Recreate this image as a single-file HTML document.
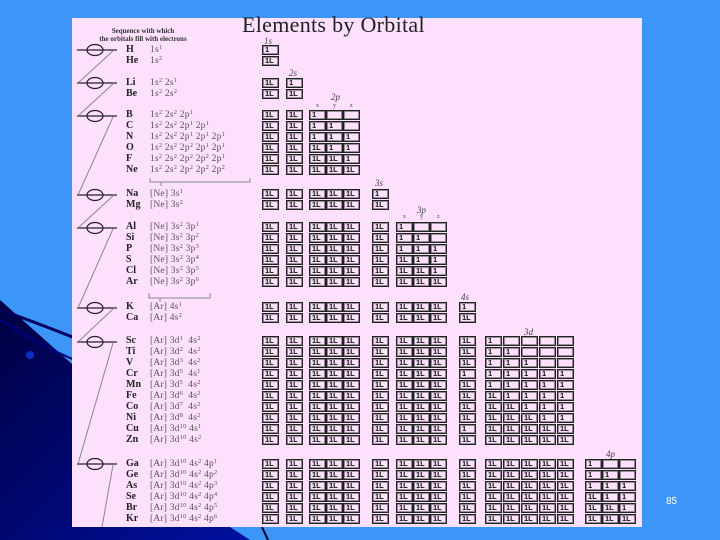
<!DOCTYPE html>
<html><head><meta charset="utf-8"><style>
*{margin:0;padding:0}
body{width:720px;height:540px;overflow:hidden;background:#3c96f8;position:relative;font-family:"Liberation Serif",serif}
#bg{position:absolute;left:0;top:0}
#pk{position:absolute;left:72px;top:18px;width:570px;height:509px;background:#fce0fc}
#title{position:absolute;left:242px;top:12px;font-size:22px;color:#222;letter-spacing:0.3px}
#seq{position:absolute;left:78px;top:27px;width:130px;text-align:center;font-size:7px;font-weight:bold;line-height:8px;color:#333}
.r{position:absolute;left:0;height:10px;width:720px}
.r b{position:absolute;left:126px;top:0;font-size:10px;line-height:10px;color:#222}
.r i{position:absolute;left:150px;top:0;font-size:9.5px;line-height:10px;height:10px;font-style:normal;color:#555;white-space:nowrap;letter-spacing:0.2px}
.r i sup{font-size:6.5px;vertical-align:3px;line-height:0}
u{position:absolute;top:0;width:13px;height:7px;border:1.3px solid #222;box-shadow:inset 0 0 0 0.8px #777;text-decoration:none;font-size:7.5px;line-height:7px;font-weight:bold;color:#111;text-align:left;padding:0 0 1px 2px;box-sizing:content-box;font-family:"Liberation Sans",sans-serif;letter-spacing:0}
.a{left:262px}.b{left:286px}
.c{left:309px}.d{left:326px}.e{left:343px}
.f{left:372px}
.g{left:396px}.h{left:413px}.i{left:430px}
.j{left:459px}
.k{left:485px}.l{left:503px}.m{left:521px}.n{left:539px}.o{left:557px}
.p{left:585px}.q{left:602px}.s{left:619px}
.lb{position:absolute;font-size:9px;font-style:italic;color:#444}
.xy{position:absolute;font-size:6px;color:#444}
#pn{position:absolute;left:666px;top:496px;font-family:"Liberation Sans",sans-serif;font-size:10px;color:#fff}
</style></head><body>
<svg id="bg" width="720" height="540">
<defs><linearGradient id="g" x1="0" y1="0" x2="1" y2="1"><stop offset="0" stop-color="#000040"/><stop offset="1" stop-color="#0010a0"/></linearGradient></defs>
<polygon points="0,300 90,380 230,527 250,540 0,540" fill="url(#g)"/>
<path d="M0,310 C30,320 55,330 80,340" stroke="#000060" stroke-width="3" fill="none"/>
<path d="M0,320 C25,335 50,350 75,360" stroke="#000080" stroke-width="2" fill="none"/>
<circle cx="30" cy="355" r="4" fill="#1030c0"/>
<path d="M262,527 L268,540" stroke="#000020" stroke-width="2"/>
</svg>
<div id="pk"></div>
<svg style="position:absolute;left:0;top:0" width="720" height="540">
<g stroke="#222" stroke-width="1.2" fill="none">
<line x1="77" y1="50" x2="117" y2="50"/><ellipse cx="95" cy="50" rx="8" ry="5.5"/>
<line x1="77" y1="83" x2="117" y2="83"/><ellipse cx="95" cy="83" rx="8" ry="5.5"/>
<line x1="77" y1="116" x2="117" y2="116"/><ellipse cx="95" cy="116" rx="8" ry="5.5"/>
<line x1="77" y1="195" x2="117" y2="195"/><ellipse cx="95" cy="195" rx="8" ry="5.5"/>
<line x1="77" y1="228" x2="117" y2="228"/><ellipse cx="95" cy="228" rx="8" ry="5.5"/>
<line x1="77" y1="308" x2="117" y2="308"/><ellipse cx="95" cy="308" rx="8" ry="5.5"/>
<line x1="77" y1="342" x2="117" y2="342"/><ellipse cx="95" cy="342" rx="8" ry="5.5"/>
<line x1="77" y1="464" x2="117" y2="464"/><ellipse cx="95" cy="464" rx="8" ry="5.5"/>
</g>
<g stroke="#888" stroke-width="1" fill="none">
<line x1="114" y1="50" x2="78" y2="83"/><line x1="114" y1="83" x2="78" y2="116"/>
<line x1="113" y1="117" x2="78" y2="195"/><line x1="114" y1="195" x2="78" y2="228"/>
<line x1="113" y1="229" x2="78" y2="308"/><line x1="114" y1="308" x2="78" y2="342"/>
<line x1="113" y1="343" x2="78" y2="464"/><line x1="113" y1="465" x2="102" y2="527"/>
<path d="M150,178 v4 h100 v-4 M161,182 v4"/>
<path d="M149,293 v5 h61 v-5 M160,298 v4"/>
</g>
</svg>
<div id="title">Elements by Orbital</div>
<div id="seq">Sequence with which<br>the orbitals fill with electrons</div>
<div class="lb" style="left:264px;top:36px">1s</div>
<div class="lb" style="left:289px;top:68px">2s</div>
<div class="lb" style="left:331px;top:92px">2p</div>
<div class="xy" style="left:316px;top:103px">x</div><div class="xy" style="left:333px;top:103px">y</div><div class="xy" style="left:350px;top:103px">z</div>
<div class="lb" style="left:375px;top:178px">3s</div>
<div class="lb" style="left:417px;top:205px">3p</div>
<div class="xy" style="left:403px;top:214px">x</div><div class="xy" style="left:420px;top:214px">y</div><div class="xy" style="left:437px;top:214px">z</div>
<div class="lb" style="left:461px;top:292px">4s</div>
<div class="lb" style="left:524px;top:327px">3d</div>
<div class="lb" style="left:606px;top:449px">4p</div>

<div class="r" style="top:45px"><b>H</b><i>1s<sup>1</sup></i><u class="a">1</u></div>
<div class="r" style="top:56px"><b>He</b><i>1s<sup>2</sup></i><u class="a">1L</u></div>
<div class="r" style="top:78px"><b>Li</b><i>1s<sup>2</sup> 2s<sup>1</sup></i><u class="a">1L</u><u class="b">1</u></div>
<div class="r" style="top:89px"><b>Be</b><i>1s<sup>2</sup> 2s<sup>2</sup></i><u class="a">1L</u><u class="b">1L</u></div>
<div class="r" style="top:110px"><b>B</b><i>1s<sup>2</sup> 2s<sup>2</sup> 2p<sup>1</sup></i><u class="a">1L</u><u class="b">1L</u><u class="c">1</u><u class="d"></u><u class="e"></u></div>
<div class="r" style="top:121px"><b>C</b><i>1s<sup>2</sup> 2s<sup>2</sup> 2p<sup>1</sup> 2p<sup>1</sup></i><u class="a">1L</u><u class="b">1L</u><u class="c">1</u><u class="d">1</u><u class="e"></u></div>
<div class="r" style="top:132px"><b>N</b><i>1s<sup>2</sup> 2s<sup>2</sup> 2p<sup>1</sup> 2p<sup>1</sup> 2p<sup>1</sup></i><u class="a">1L</u><u class="b">1L</u><u class="c">1</u><u class="d">1</u><u class="e">1</u></div>
<div class="r" style="top:143px"><b>O</b><i>1s<sup>2</sup> 2s<sup>2</sup> 2p<sup>2</sup> 2p<sup>1</sup> 2p<sup>1</sup></i><u class="a">1L</u><u class="b">1L</u><u class="c">1L</u><u class="d">1</u><u class="e">1</u></div>
<div class="r" style="top:154px"><b>F</b><i>1s<sup>2</sup> 2s<sup>2</sup> 2p<sup>2</sup> 2p<sup>2</sup> 2p<sup>1</sup></i><u class="a">1L</u><u class="b">1L</u><u class="c">1L</u><u class="d">1L</u><u class="e">1</u></div>
<div class="r" style="top:165px"><b>Ne</b><i>1s<sup>2</sup> 2s<sup>2</sup> 2p<sup>2</sup> 2p<sup>2</sup> 2p<sup>2</sup></i><u class="a">1L</u><u class="b">1L</u><u class="c">1L</u><u class="d">1L</u><u class="e">1L</u></div>

<div class="r" style="top:189px"><b>Na</b><i>[Ne] 3s<sup>1</sup></i><u class="a">1L</u><u class="b">1L</u><u class="c">1L</u><u class="d">1L</u><u class="e">1L</u><u class="f">1</u></div>
<div class="r" style="top:200px"><b>Mg</b><i>[Ne] 3s<sup>2</sup></i><u class="a">1L</u><u class="b">1L</u><u class="c">1L</u><u class="d">1L</u><u class="e">1L</u><u class="f">1L</u></div>

<div class="r" style="top:222px"><b>Al</b><i>[Ne] 3s<sup>2</sup> 3p<sup>1</sup></i><u class="a">1L</u><u class="b">1L</u><u class="c">1L</u><u class="d">1L</u><u class="e">1L</u><u class="f">1L</u><u class="g">1</u><u class="h"></u><u class="i"></u></div>
<div class="r" style="top:233px"><b>Si</b><i>[Ne] 3s<sup>2</sup> 3p<sup>2</sup></i><u class="a">1L</u><u class="b">1L</u><u class="c">1L</u><u class="d">1L</u><u class="e">1L</u><u class="f">1L</u><u class="g">1</u><u class="h">1</u><u class="i"></u></div>
<div class="r" style="top:244px"><b>P</b><i>[Ne] 3s<sup>2</sup> 3p<sup>3</sup></i><u class="a">1L</u><u class="b">1L</u><u class="c">1L</u><u class="d">1L</u><u class="e">1L</u><u class="f">1L</u><u class="g">1</u><u class="h">1</u><u class="i">1</u></div>
<div class="r" style="top:255px"><b>S</b><i>[Ne] 3s<sup>2</sup> 3p<sup>4</sup></i><u class="a">1L</u><u class="b">1L</u><u class="c">1L</u><u class="d">1L</u><u class="e">1L</u><u class="f">1L</u><u class="g">1L</u><u class="h">1</u><u class="i">1</u></div>
<div class="r" style="top:266px"><b>Cl</b><i>[Ne] 3s<sup>2</sup> 3p<sup>5</sup></i><u class="a">1L</u><u class="b">1L</u><u class="c">1L</u><u class="d">1L</u><u class="e">1L</u><u class="f">1L</u><u class="g">1L</u><u class="h">1L</u><u class="i">1</u></div>
<div class="r" style="top:277px"><b>Ar</b><i>[Ne] 3s<sup>2</sup> 3p<sup>6</sup></i><u class="a">1L</u><u class="b">1L</u><u class="c">1L</u><u class="d">1L</u><u class="e">1L</u><u class="f">1L</u><u class="g">1L</u><u class="h">1L</u><u class="i">1L</u></div>

<div class="r" style="top:302px"><b>K</b><i>[Ar] 4s<sup>1</sup></i><u class="a">1L</u><u class="b">1L</u><u class="c">1L</u><u class="d">1L</u><u class="e">1L</u><u class="f">1L</u><u class="g">1L</u><u class="h">1L</u><u class="i">1L</u><u class="j">1</u></div>
<div class="r" style="top:313px"><b>Ca</b><i>[Ar] 4s<sup>2</sup></i><u class="a">1L</u><u class="b">1L</u><u class="c">1L</u><u class="d">1L</u><u class="e">1L</u><u class="f">1L</u><u class="g">1L</u><u class="h">1L</u><u class="i">1L</u><u class="j">1L</u></div>

<div class="r" style="top:336px"><b>Sc</b><i>[Ar] 3d<sup>1</sup> &nbsp;4s<sup>2</sup></i><u class="a">1L</u><u class="b">1L</u><u class="c">1L</u><u class="d">1L</u><u class="e">1L</u><u class="f">1L</u><u class="g">1L</u><u class="h">1L</u><u class="i">1L</u><u class="j">1L</u><u class="k">1</u><u class="l"></u><u class="m"></u><u class="n"></u><u class="o"></u></div>
<div class="r" style="top:347px"><b>Ti</b><i>[Ar] 3d<sup>2</sup> &nbsp;4s<sup>2</sup></i><u class="a">1L</u><u class="b">1L</u><u class="c">1L</u><u class="d">1L</u><u class="e">1L</u><u class="f">1L</u><u class="g">1L</u><u class="h">1L</u><u class="i">1L</u><u class="j">1L</u><u class="k">1</u><u class="l">1</u><u class="m"></u><u class="n"></u><u class="o"></u></div>
<div class="r" style="top:358px"><b>V</b><i>[Ar] 3d<sup>3</sup> &nbsp;4s<sup>2</sup></i><u class="a">1L</u><u class="b">1L</u><u class="c">1L</u><u class="d">1L</u><u class="e">1L</u><u class="f">1L</u><u class="g">1L</u><u class="h">1L</u><u class="i">1L</u><u class="j">1L</u><u class="k">1</u><u class="l">1</u><u class="m">1</u><u class="n"></u><u class="o"></u></div>
<div class="r" style="top:369px"><b>Cr</b><i>[Ar] 3d<sup>5</sup> &nbsp;4s<sup>1</sup></i><u class="a">1L</u><u class="b">1L</u><u class="c">1L</u><u class="d">1L</u><u class="e">1L</u><u class="f">1L</u><u class="g">1L</u><u class="h">1L</u><u class="i">1L</u><u class="j">1</u><u class="k">1</u><u class="l">1</u><u class="m">1</u><u class="n">1</u><u class="o">1</u></div>
<div class="r" style="top:380px"><b>Mn</b><i>[Ar] 3d<sup>5</sup> &nbsp;4s<sup>2</sup></i><u class="a">1L</u><u class="b">1L</u><u class="c">1L</u><u class="d">1L</u><u class="e">1L</u><u class="f">1L</u><u class="g">1L</u><u class="h">1L</u><u class="i">1L</u><u class="j">1L</u><u class="k">1</u><u class="l">1</u><u class="m">1</u><u class="n">1</u><u class="o">1</u></div>
<div class="r" style="top:391px"><b>Fe</b><i>[Ar] 3d<sup>6</sup> &nbsp;4s<sup>2</sup></i><u class="a">1L</u><u class="b">1L</u><u class="c">1L</u><u class="d">1L</u><u class="e">1L</u><u class="f">1L</u><u class="g">1L</u><u class="h">1L</u><u class="i">1L</u><u class="j">1L</u><u class="k">1L</u><u class="l">1</u><u class="m">1</u><u class="n">1</u><u class="o">1</u></div>
<div class="r" style="top:402px"><b>Co</b><i>[Ar] 3d<sup>7</sup> &nbsp;4s<sup>2</sup></i><u class="a">1L</u><u class="b">1L</u><u class="c">1L</u><u class="d">1L</u><u class="e">1L</u><u class="f">1L</u><u class="g">1L</u><u class="h">1L</u><u class="i">1L</u><u class="j">1L</u><u class="k">1L</u><u class="l">1L</u><u class="m">1</u><u class="n">1</u><u class="o">1</u></div>
<div class="r" style="top:413px"><b>Ni</b><i>[Ar] 3d<sup>8</sup> &nbsp;4s<sup>2</sup></i><u class="a">1L</u><u class="b">1L</u><u class="c">1L</u><u class="d">1L</u><u class="e">1L</u><u class="f">1L</u><u class="g">1L</u><u class="h">1L</u><u class="i">1L</u><u class="j">1L</u><u class="k">1L</u><u class="l">1L</u><u class="m">1L</u><u class="n">1</u><u class="o">1</u></div>
<div class="r" style="top:424px"><b>Cu</b><i>[Ar] 3d<sup>10</sup> 4s<sup>1</sup></i><u class="a">1L</u><u class="b">1L</u><u class="c">1L</u><u class="d">1L</u><u class="e">1L</u><u class="f">1L</u><u class="g">1L</u><u class="h">1L</u><u class="i">1L</u><u class="j">1</u><u class="k">1L</u><u class="l">1L</u><u class="m">1L</u><u class="n">1L</u><u class="o">1L</u></div>
<div class="r" style="top:435px"><b>Zn</b><i>[Ar] 3d<sup>10</sup> 4s<sup>2</sup></i><u class="a">1L</u><u class="b">1L</u><u class="c">1L</u><u class="d">1L</u><u class="e">1L</u><u class="f">1L</u><u class="g">1L</u><u class="h">1L</u><u class="i">1L</u><u class="j">1L</u><u class="k">1L</u><u class="l">1L</u><u class="m">1L</u><u class="n">1L</u><u class="o">1L</u></div>

<div class="r" style="top:459px"><b>Ga</b><i>[Ar] 3d<sup>10</sup> 4s<sup>2</sup> 4p<sup>1</sup></i><u class="a">1L</u><u class="b">1L</u><u class="c">1L</u><u class="d">1L</u><u class="e">1L</u><u class="f">1L</u><u class="g">1L</u><u class="h">1L</u><u class="i">1L</u><u class="j">1L</u><u class="k">1L</u><u class="l">1L</u><u class="m">1L</u><u class="n">1L</u><u class="o">1L</u><u class="p">1</u><u class="q"></u><u class="s"></u></div>
<div class="r" style="top:470px"><b>Ge</b><i>[Ar] 3d<sup>10</sup> 4s<sup>2</sup> 4p<sup>2</sup></i><u class="a">1L</u><u class="b">1L</u><u class="c">1L</u><u class="d">1L</u><u class="e">1L</u><u class="f">1L</u><u class="g">1L</u><u class="h">1L</u><u class="i">1L</u><u class="j">1L</u><u class="k">1L</u><u class="l">1L</u><u class="m">1L</u><u class="n">1L</u><u class="o">1L</u><u class="p">1</u><u class="q">1</u><u class="s"></u></div>
<div class="r" style="top:481px"><b>As</b><i>[Ar] 3d<sup>10</sup> 4s<sup>2</sup> 4p<sup>3</sup></i><u class="a">1L</u><u class="b">1L</u><u class="c">1L</u><u class="d">1L</u><u class="e">1L</u><u class="f">1L</u><u class="g">1L</u><u class="h">1L</u><u class="i">1L</u><u class="j">1L</u><u class="k">1L</u><u class="l">1L</u><u class="m">1L</u><u class="n">1L</u><u class="o">1L</u><u class="p">1</u><u class="q">1</u><u class="s">1</u></div>
<div class="r" style="top:492px"><b>Se</b><i>[Ar] 3d<sup>10</sup> 4s<sup>2</sup> 4p<sup>4</sup></i><u class="a">1L</u><u class="b">1L</u><u class="c">1L</u><u class="d">1L</u><u class="e">1L</u><u class="f">1L</u><u class="g">1L</u><u class="h">1L</u><u class="i">1L</u><u class="j">1L</u><u class="k">1L</u><u class="l">1L</u><u class="m">1L</u><u class="n">1L</u><u class="o">1L</u><u class="p">1L</u><u class="q">1</u><u class="s">1</u></div>
<div class="r" style="top:503px"><b>Br</b><i>[Ar] 3d<sup>10</sup> 4s<sup>2</sup> 4p<sup>5</sup></i><u class="a">1L</u><u class="b">1L</u><u class="c">1L</u><u class="d">1L</u><u class="e">1L</u><u class="f">1L</u><u class="g">1L</u><u class="h">1L</u><u class="i">1L</u><u class="j">1L</u><u class="k">1L</u><u class="l">1L</u><u class="m">1L</u><u class="n">1L</u><u class="o">1L</u><u class="p">1L</u><u class="q">1L</u><u class="s">1</u></div>
<div class="r" style="top:514px"><b>Kr</b><i>[Ar] 3d<sup>10</sup> 4s<sup>2</sup> 4p<sup>6</sup></i><u class="a">1L</u><u class="b">1L</u><u class="c">1L</u><u class="d">1L</u><u class="e">1L</u><u class="f">1L</u><u class="g">1L</u><u class="h">1L</u><u class="i">1L</u><u class="j">1L</u><u class="k">1L</u><u class="l">1L</u><u class="m">1L</u><u class="n">1L</u><u class="o">1L</u><u class="p">1L</u><u class="q">1L</u><u class="s">1L</u></div>

<div id="pn">85</div>
</body></html>
